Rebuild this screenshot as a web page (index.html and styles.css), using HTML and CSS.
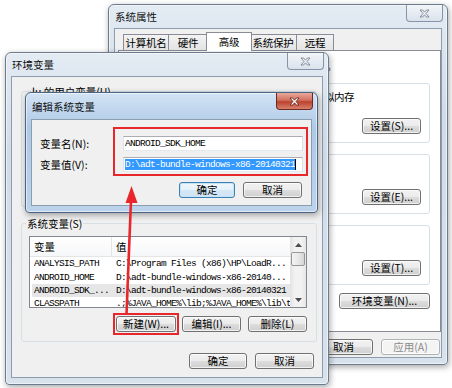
FILE: index.html
```html
<!DOCTYPE html>
<html lang="zh-CN">
<head>
  <meta charset="UTF-8">
  <meta name="viewport" content="width=device-width, initial-scale=1.0">
  <title>环境变量</title>
  <link rel="stylesheet" href="styles.css">
</head>
<body>
<div class="desk">

  <!-- 系统属性 -->
  <div class="win sys">
    <div class="title">系统属性</div>
    <div class="close"><svg width="11" height="9" viewBox="0 0 11 9"><path d="M1 1h2.6L5.5 3.2 7.4 1H10L7 4.5 10 8H7.4L5.5 5.8 3.6 8H1L4 4.5Z"/></svg></div>
    <div class="client sys-client">
      <div class="tabs">
        <span class="tab t1">计算机名</span>
        <span class="tab t2">硬件</span>
        <span class="tab t3 on">高级</span>
        <span class="tab t4">系统保护</span>
        <span class="tab t5">远程</span>
      </div>
      <div class="panel">
        <p class="note">要进行大多数改动，您必须作为管理员登录。</p>
        <fieldset class="grp">
          <legend>性能</legend>
          <p>视觉效果，处理器计划，内存使用，以及虚拟内存</p>
          <div class="grp-btns"><button class="btn">设置(S)...</button></div>
        </fieldset>
        <fieldset class="grp">
          <legend>用户配置文件</legend>
          <p>与登录有关的桌面设置</p>
          <div class="grp-btns"><button class="btn">设置(E)...</button></div>
        </fieldset>
        <fieldset class="grp">
          <legend>启动和故障恢复</legend>
          <p>系统启动、系统失败和调试信息</p>
          <div class="grp-btns"><button class="btn">设置(T)...</button></div>
        </fieldset>
        <div class="env-row"><button class="btn wide">环境变量(N)...</button></div>
      </div>
      <div class="dlg-btns">
        <button class="btn">确定</button>
        <button class="btn">取消</button>
        <button class="btn" disabled>应用(A)</button>
      </div>
    </div>
  </div>

  <!-- 环境变量 -->
  <div class="win env">
    <div class="title">环境变量</div>
    <div class="close"><svg width="11" height="9" viewBox="0 0 11 9"><path d="M1 1h2.6L5.5 3.2 7.4 1H10L7 4.5 10 8H7.4L5.5 5.8 3.6 8H1L4 4.5Z"/></svg></div>
    <div class="client env-client">
      <fieldset class="vars user-vars">
        <legend>lu 的用户变量(U)</legend>
      </fieldset>
      <fieldset class="vars">
        <legend>系统变量(S)</legend>
        <div class="list">
          <div class="list-body">
            <div class="lv-head"><span class="c1">变量</span><span class="c2">值</span></div>
            <div class="lv-row mono"><span class="c1">ANALYSIS_PATH</span><span class="c2">C:\Program Files (x86)\HP\LoadR...</span></div>
            <div class="lv-row mono"><span class="c1">ANDROID_HOME</span><span class="c2">D:\adt-bundle-windows-x86-20140...</span></div>
            <div class="lv-row mono sel"><span class="c1">ANDROID_SDK_...</span><span class="c2">D:\adt-bundle-windows-x86-20140321</span></div>
            <div class="lv-row mono"><span class="c1">CLASSPATH</span><span class="c2">.;%JAVA_HOME%\lib;%JAVA_HOME%\lib\tools.jar</span></div>
          </div>
          <div class="vscroll">
            <span class="sb-btn"><svg width="7" height="4" viewBox="0 0 7 4"><path d="M0 4L3.5 0 7 4Z"/></svg></span>
            <span class="sb-thumb"></span>
            <span class="sb-track"></span>
            <span class="sb-btn"><svg width="7" height="4" viewBox="0 0 7 4"><path d="M0 0L3.5 4 7 0Z"/></svg></span>
          </div>
        </div>
        <div class="var-btns">
          <span class="mark-btn"><button class="btn new">新建(W)...</button></span>
          <button class="btn">编辑(I)...</button>
          <button class="btn">删除(L)</button>
        </div>
      </fieldset>
      <div class="dlg-btns">
        <button class="btn">确定</button>
        <button class="btn">取消</button>
      </div>
    </div>
  </div>

  <!-- 编辑系统变量 -->
  <div class="win edit active">
    <div class="title">编辑系统变量</div>
    <div class="close"><svg width="11" height="9" viewBox="0 0 11 9"><path d="M1 1h2.6L5.5 3.2 7.4 1H10L7 4.5 10 8H7.4L5.5 5.8 3.6 8H1L4 4.5Z"/></svg></div>
    <div class="client edit-client">
      <div class="edit-form">
        <div class="labels">
          <span>变量名(N):</span>
          <span>变量值(V):</span>
        </div>
        <div class="mark">
          <div class="field mono">ANDROID_SDK_HOME</div>
          <div class="field mono"><span class="picked">D:\adt-bundle-windows-x86-20140321</span><span class="caret"></span></div>
        </div>
      </div>
      <div class="dlg-btns">
        <button class="btn def">确定</button>
        <button class="btn">取消</button>
      </div>
    </div>
  </div>

  <!-- red arrow from 新建 to the value fields -->
  <svg class="arrow" width="452" height="388" viewBox="0 0 452 388">
    <line x1="126.5" y1="314" x2="131" y2="200" stroke="#e8262b" stroke-width="2.6"/>
    <polygon points="131.5,186 125.5,203 137.5,203" fill="#e8262b"/>
  </svg>
</div>
</body>
</html>
```

FILE: styles.css
```css
* {
  box-sizing: border-box;
}
body {
  margin: 0;
  background: #fff;
  font-family: "Noto Sans CJK SC", "Noto Sans", sans-serif;
  font-size: 10.5px;
  color: #000;
}
p {
  margin: 0;
}
.desk {
  position: relative;
  width: 452px;
  height: 388px;
  overflow: hidden;
}

/* window frames */
.win {
  position: absolute;
  display: flex;
  flex-direction: column;
  padding: 0 5px 6px;
  border: 1px solid #6d7c8c;
  border-radius: 6px 6px 4px 4px;
  background: linear-gradient(#e3ebf3, #d0dce8 30%, #d8e2ec);
  box-shadow: inset 0 0 0 1px rgba(255, 255, 255, .55), 1px 2px 6px rgba(0, 0, 0, .35);
}
.win.active {
  border-color: #4a6584;
  background: linear-gradient(#d2e3f4, #aec9e6 30%, #bdd3ec);
}
.sys {
  left: 108px;
  top: 4px;
  width: 340px;
  height: 361px;
}
.env {
  left: 5px;
  top: 52px;
  width: 324px;
  height: 333px;
}
.edit {
  left: 25px;
  top: 92px;
  width: 293px;
  height: 121px;
}
.title {
  flex: none;
  height: 23px;
  display: flex;
  align-items: center;
  padding-left: 1px;
  color: #111;
}
.edit .title {
  height: 26px;
}
.close {
  position: absolute;
  top: 0;
  right: 4px;
  width: 37px;
  height: 17px;
  display: flex;
  align-items: center;
  justify-content: center;
  border: 1px solid #8595a7;
  border-top: 0;
  border-radius: 0 0 4px 4px;
  background: linear-gradient(#f3f6f9, #dae2eb);
}
.close path {
  fill: #eef2f6;
  stroke: #6c7988;
  stroke-width: .8;
}
.active .close {
  border-color: #6b2a21;
  background: linear-gradient(#eaa99b, #d0705e 45%, #bd422f 55%, #d7806d);
}
.active .close path {
  fill: #fff;
  stroke: #5b1d14;
}
.client {
  flex: 1;
  min-width: 0;
  display: flex;
  flex-direction: column;
  background: #f0f0f0;
  border: 1px solid #8c9db0;
}

/* buttons */
.btn {
  flex: none;
  width: 59px;
  height: 16px;
  margin: 0;
  padding: 0;
  font: inherit;
  line-height: 14px;
  color: #000;
  border: 1px solid #707070;
  border-radius: 3px;
  background: linear-gradient(#f2f2f2, #ebebeb 50%, #dddddd 50%, #cfcfcf);
  box-shadow: inset 0 0 0 1px rgba(255, 255, 255, .7);
  white-space: nowrap;
}
.btn.wide {
  width: 91px;
}
.btn.def {
  width: 56px;
  border-color: #3c7fb1;
  background: linear-gradient(#f0f7fc, #e5f1fa 50%, #d4e7f6 50%, #cfe4f5);
  box-shadow: inset 0 0 0 1px #c5e4f8;
}
.btn:disabled {
  color: #8a8a8a;
  border-color: #adb2b5;
  background: #f4f4f4;
}
.dlg-btns {
  display: flex;
  justify-content: flex-end;
  gap: 8px;
}

/* 系统属性 */
.sys-client {
  padding: 3px 0 0 3px;
}
.tabs {
  display: flex;
  align-items: flex-end;
  height: 19px;
  margin: 0 0 -1px 5px;
  position: relative;
  z-index: 1;
}
.tab {
  height: 16px;
  margin: 0 0 1px -1px;
  border: 1px solid #898c95;
  border-bottom: 0;
  background: linear-gradient(#f3f3f3, #e3e3e3);
  display: flex;
  align-items: center;
  justify-content: center;
  letter-spacing: -0.3px;
}
.t1 { width: 46px; margin-left: 0; }
.t2 { width: 40px; }
.t3 { width: 46px; }
.t4 { width: 48px; }
.t5 { width: 38px; }
.tab.on {
  height: 19px;
  margin: 0 -2px 0 -2px;
  background: #fff;
  position: relative;
  z-index: 1;
  align-items: flex-start;
  padding-top: 1px;
}
.panel {
  height: 282px;
  border: 1px solid #898c95;
  background: #fff;
  padding: 8px 10px 0 8px;
}
.note {
  line-height: 13px;
  white-space: nowrap;
}
.grp {
  min-width: 0;
  margin: 5px 0 0;
  padding: 0 8px 8px;
  border: 1px solid #d5dfe5;
  border-radius: 3px;
}
.grp legend {
  padding: 0 2px;
  line-height: 13px;
}
.grp p {
  line-height: 13px;
  white-space: nowrap;
  letter-spacing: -0.6px;
}
.grp-btns {
  display: flex;
  justify-content: flex-end;
  margin-top: 15px;
}
.env-row {
  display: flex;
  justify-content: flex-end;
  margin-top: 8px;
}
.sys .dlg-btns {
  margin-top: 7px;
  padding-right: 1px;
}

/* 环境变量 */
.vars {
  min-width: 0;
  margin: 0 5px 0 9px;
  padding: 0 9px 9px 7px;
  border: 1px solid #d5dfe5;
  border-radius: 3px;
}
.vars legend {
  margin-left: -3px;
  padding: 0 1px;
  line-height: 13px;
}
.user-vars {
  margin-top: 8px;
  margin-bottom: 10px;
  height: 122px;
}
.user-vars legend {
  margin-left: 2px;
}
.list {
  display: flex;
  height: 72px;
  margin-top: 6px;
  border: 1px solid #828790;
  background: #fff;
}
.list-body {
  flex: 1;
  min-width: 0;
  overflow: hidden;
}
.lv-head {
  display: flex;
  height: 20px;
  align-items: center;
  border-bottom: 1px solid #e5e5e5;
  background: linear-gradient(#fff, #f6f7f9);
}
.lv-head .c1 {
  border-right: 1px solid #e5e5e5;
  line-height: 19px;
}
.c1 {
  flex: none;
  width: 82px;
  padding-left: 4px;
}
.c2 {
  padding-left: 4px;
}
.lv-row {
  display: flex;
  height: 13.4px;
  align-items: center;
  white-space: pre;
}
.lv-row.sel {
  margin-left: 2px;
  background: #e6e6e6;
}
.lv-row.sel .c1 {
  width: 80px;
  padding-left: 2px;
}
.mono {
  font-family: "Liberation Mono", "DejaVu Sans Mono", monospace;
  font-size: 9.5px;
  letter-spacing: -0.7px;
}
.vscroll {
  flex: none;
  width: 16px;
  display: flex;
  flex-direction: column;
  background: linear-gradient(90deg, #e3e3e3, #f2f2f2 30%, #f2f2f2 70%, #e6e6e6);
}
.sb-btn {
  height: 15px;
  display: flex;
  align-items: center;
  justify-content: center;
}
.sb-btn path {
  fill: #4d4d4d;
}
.sb-thumb {
  height: 14px;
  margin: 0 1px;
  border: 1px solid #979797;
  border-radius: 2px;
  background: linear-gradient(90deg, #f3f3f3, #e8e8e8 50%, #d6d6d6);
}
.sb-track {
  flex: 1;
}
.var-btns {
  display: flex;
  justify-content: flex-end;
  align-items: center;
  gap: 7px;
  margin-top: 8px;
}
.mark-btn {
  display: flex;
  margin: -3px -4px -3px 0;
  padding: 1px;
  border: 2px solid #e8262b;
}
.btn.new {
  width: 60px;
}
.env .dlg-btns {
  margin-top: 11px;
  padding-right: 8px;
}
.env .dlg-btns .btn:first-child {
  width: 58px;
}

/* 编辑系统变量 */
.edit-form {
  display: flex;
  padding: 7px 3px 0 8px;
}
.labels {
  flex: none;
  width: 73px;
  display: flex;
  flex-direction: column;
  gap: 6px;
  padding-top: 9px;
}
.labels span {
  line-height: 15px;
  white-space: nowrap;
}
.mark {
  flex: 1;
  min-width: 0;
  display: flex;
  flex-direction: column;
  gap: 6px;
  padding: 7px 3px 2px 8px;
  border: 2px solid #e8262b;
}
.field {
  height: 15px;
  display: flex;
  align-items: center;
  padding-left: 1px;
  background: #fff;
  border: 1px solid;
  border-color: #abadb3 #dbdfe6 #e3e9ef #e2e3ea;
  white-space: nowrap;
  overflow: hidden;
}
.picked {
  background: #3399ff;
  color: #fff;
  line-height: 11px;
}
.caret {
  width: 1px;
  height: 11px;
  background: #000;
}
.edit .dlg-btns {
  margin-top: 6px;
  padding-right: 9px;
}

.arrow {
  position: absolute;
  left: 0;
  top: 0;
  pointer-events: none;
}
```
